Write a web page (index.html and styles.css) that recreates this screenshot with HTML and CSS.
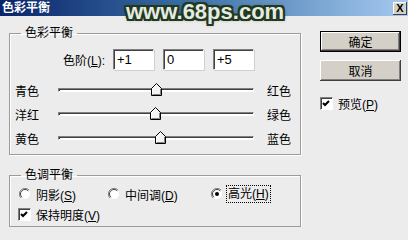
FILE: index.html
```html
<!DOCTYPE html>
<html lang="zh-CN">
<head>
    <meta charset="UTF-8">
    <title>色彩平衡</title>
    <link rel="stylesheet" href="styles.css">
</head>
<body>
    <div class="titlebar">
        <span class="title">色彩平衡</span>
        <span class="watermark">www.68ps.com</span>
        <span class="close-btn">X</span>
    </div>

    <div class="dialog">
        <div class="groups">
            <fieldset class="group group-color">
                <legend>色彩平衡</legend>
                <div class="levels">
                    <span class="levels-label">色阶(<u>L</u>):</span>
                    <span class="field">+1</span>
                    <span class="field">0</span>
                    <span class="field">+5</span>
                </div>
                <div class="slider-row">
                    <span class="slider-left">青色</span>
                    <div class="track"><span class="thumb" style="left: 50.5%"></span></div>
                    <span class="slider-right">红色</span>
                </div>
                <div class="slider-row">
                    <span class="slider-left">洋红</span>
                    <div class="track"><span class="thumb" style="left: 50%"></span></div>
                    <span class="slider-right">绿色</span>
                </div>
                <div class="slider-row">
                    <span class="slider-left">黄色</span>
                    <div class="track"><span class="thumb" style="left: 52.5%"></span></div>
                    <span class="slider-right">蓝色</span>
                </div>
            </fieldset>

            <fieldset class="group group-tone">
                <legend>色调平衡</legend>
                <div class="radio-row">
                    <span class="radio-item item-shadow"><span class="radio"></span><span>阴影(<u>S</u>)</span></span>
                    <span class="radio-item item-mid"><span class="radio"></span><span>中间调(<u>D</u>)</span></span>
                    <span class="radio-item"><span class="radio checked"></span><span class="focus">高光(<u>H</u>)</span></span>
                </div>
                <div class="check-row">
                    <span class="checkbox checked"></span><span>保持明度(<u>V</u>)</span>
                </div>
            </fieldset>
        </div>

        <div class="side">
            <button class="btn btn-default">确定</button>
            <button class="btn">取消</button>
            <div class="check-row preview">
                <span class="checkbox checked"></span><span>预览(<u>P</u>)</span>
            </div>
        </div>
    </div>
</body>
</html>
```

FILE: styles.css
```css
body {
    margin: 0;
    background-color: #ececec;
    font-family: "Liberation Sans", "Noto Sans CJK SC", sans-serif;
    font-size: 12px;
    color: #000;
}
u {
    text-decoration: underline;
    text-underline-offset: 1px;
}

/* title bar */
.titlebar {
    position: relative;
    display: flex;
    align-items: center;
    height: 16px;
    padding-left: 2px;
    background: linear-gradient(to right, #0a246a 0%, #3a6ea5 45%, #a6caf0 100%);
}
.title {
    color: #fff;
    font-weight: bold;
    line-height: 14px;
}
.watermark {
    position: absolute;
    left: 126px;
    top: -2px;
    font-family: "Liberation Sans", sans-serif;
    font-weight: bold;
    font-size: 22px;
    line-height: 28px;
    color: #e4ebe2;
    text-shadow:
        2px 0 0 #22381f, -2px 0 0 #22381f, 0 2px 0 #22381f, 0 -2px 0 #22381f,
        2px 2px 0 #22381f, -2px -2px 0 #22381f, 2px -2px 0 #22381f, -2px 2px 0 #22381f,
        0 0 4px #22381f;
}
.close-btn {
    margin-left: auto;
    margin-right: 1px;
    width: 14px;
    height: 13px;
    box-sizing: border-box;
    background-color: #d4d0c8;
    box-shadow: inset -1px -1px #404040, inset 1px 1px #fff;
    font-family: "Liberation Sans", sans-serif;
    font-weight: bold;
    font-size: 11px;
    line-height: 13px;
    text-align: center;
}

/* layout */
.dialog {
    display: flex;
    padding-top: 10px;
}
.groups {
    display: flex;
    flex-direction: column;
    margin-left: 9px;
}
.group {
    width: 292px;
    box-sizing: border-box;
    margin: 0;
    padding: 0;
    border: 1px solid #9c9c9c;
    box-shadow: inset 1px 1px #fff, 1px 1px #fff;
}
.group legend {
    margin-left: 11px;
    padding: 0 4px;
    line-height: 14px;
}
.group-color {
    padding-bottom: 4px;
}
.group-tone {
    margin-top: 13px;
    padding-bottom: 4px;
}

/* levels */
.levels {
    display: flex;
    align-items: center;
    height: 21px;
    margin-top: 9px;
    margin-bottom: 8px;
}
.levels-label {
    width: 103px;
    padding-right: 8px;
    box-sizing: border-box;
    text-align: right;
}
.field {
    width: 41px;
    height: 21px;
    margin-right: 9px;
    box-sizing: border-box;
    padding-left: 3px;
    background-color: #fff;
    border-top: 1px solid #808080;
    border-left: 1px solid #808080;
    border-bottom: 1px solid #fff;
    border-right: 1px solid #fff;
    box-shadow: inset 1px 1px #404040, 1px 1px #d4d0c8;
    font-size: 13px;
    line-height: 19px;
}

/* sliders */
.slider-row {
    display: flex;
    align-items: center;
    height: 24px;
}
.slider-left {
    width: 48px;
    padding-left: 5px;
    box-sizing: border-box;
}
.track {
    position: relative;
    width: 196px;
    height: 4px;
    box-sizing: border-box;
    background-color: #fff;
    border-top: 1px solid #808080;
    border-left: 1px solid #808080;
    border-bottom: 1px solid #fff;
    border-right: 1px solid #fff;
    box-shadow: inset 1px 1px #404040;
}
.slider-right {
    margin-left: 13px;
}
.thumb {
    position: absolute;
    top: -6px;
    width: 11px;
    height: 13px;
    margin-left: -6px;
    background: url("data:image/svg+xml;utf8,<svg xmlns='http://www.w3.org/2000/svg' width='11' height='13'><polygon points='0.5,5.5 5.5,0.5 10.5,5.5 10.5,12.5 0.5,12.5' fill='%23f4f4f4' stroke='%23000'/><polyline points='1.5,12 1.5,5.9 5.5,1.9' fill='none' stroke='%23fff'/><polyline points='1.5,11.5 9.5,11.5 9.5,5.9' fill='none' stroke='%23808080'/></svg>") no-repeat;
}

/* tone */
.radio-row {
    display: flex;
    align-items: center;
    height: 16px;
    margin-top: 4px;
    padding-left: 9px;
}
.radio-item {
    display: flex;
    align-items: center;
    gap: 5px;
}
.item-shadow {
    width: 89px;
}
.item-mid {
    width: 103px;
}
.radio {
    width: 12px;
    height: 12px;
    background: url("data:image/svg+xml;utf8,<svg xmlns='http://www.w3.org/2000/svg' width='12' height='12'><circle cx='6' cy='6' r='5.5' fill='%23fff'/><path d='M10 2 A5.5 5.5 0 0 0 2 10' fill='none' stroke='%23808080'/><path d='M9.2 2.8 A4.5 4.5 0 0 0 2.8 9.2' fill='none' stroke='%23404040'/><path d='M2 10 A5.5 5.5 0 0 0 10 2' fill='none' stroke='%23e8e8e8'/></svg>") no-repeat;
}
.radio.checked {
    background: url("data:image/svg+xml;utf8,<svg xmlns='http://www.w3.org/2000/svg' width='12' height='12'><circle cx='6' cy='6' r='5.5' fill='%23fff'/><path d='M10 2 A5.5 5.5 0 0 0 2 10' fill='none' stroke='%23808080'/><path d='M9.2 2.8 A4.5 4.5 0 0 0 2.8 9.2' fill='none' stroke='%23404040'/><path d='M2 10 A5.5 5.5 0 0 0 10 2' fill='none' stroke='%23e8e8e8'/><circle cx='6' cy='6' r='2' fill='%23000'/></svg>") no-repeat;
}
.focus {
    outline: 1px dotted #000;
    outline-offset: 1px;
    line-height: 14px;
}
.check-row {
    display: flex;
    align-items: center;
    gap: 5px;
    height: 16px;
    margin-top: 4px;
    padding-left: 8px;
}
.checkbox {
    width: 13px;
    height: 13px;
    box-sizing: border-box;
    background-color: #fff;
    border-top: 1px solid #808080;
    border-left: 1px solid #808080;
    border-bottom: 1px solid #fff;
    border-right: 1px solid #fff;
    box-shadow: inset 1px 1px #404040;
}
.checkbox.checked {
    background: #fff url("data:image/svg+xml;utf8,<svg xmlns='http://www.w3.org/2000/svg' width='11' height='11'><polyline points='2,5 4,7 8,3' fill='none' stroke='%23000' stroke-width='2'/></svg>") no-repeat 0 0;
}

/* right side */
.side {
    display: flex;
    flex-direction: column;
    margin-left: 19px;
    padding-top: 5px;
}
.btn {
    width: 81px;
    height: 21px;
    padding: 0;
    margin-bottom: 8px;
    box-sizing: border-box;
    border: none;
    background-color: #d4d0c8;
    box-shadow: inset -1px -1px #404040, inset 1px 1px #fff, inset -2px -2px #808080;
    font-family: "Liberation Sans", "Noto Sans CJK SC", sans-serif;
    font-size: 12px;
    color: #000;
}
.btn-default {
    border: 1px solid #000;
}
.preview {
    margin-top: 6px;
    padding-left: 0;
}
```
